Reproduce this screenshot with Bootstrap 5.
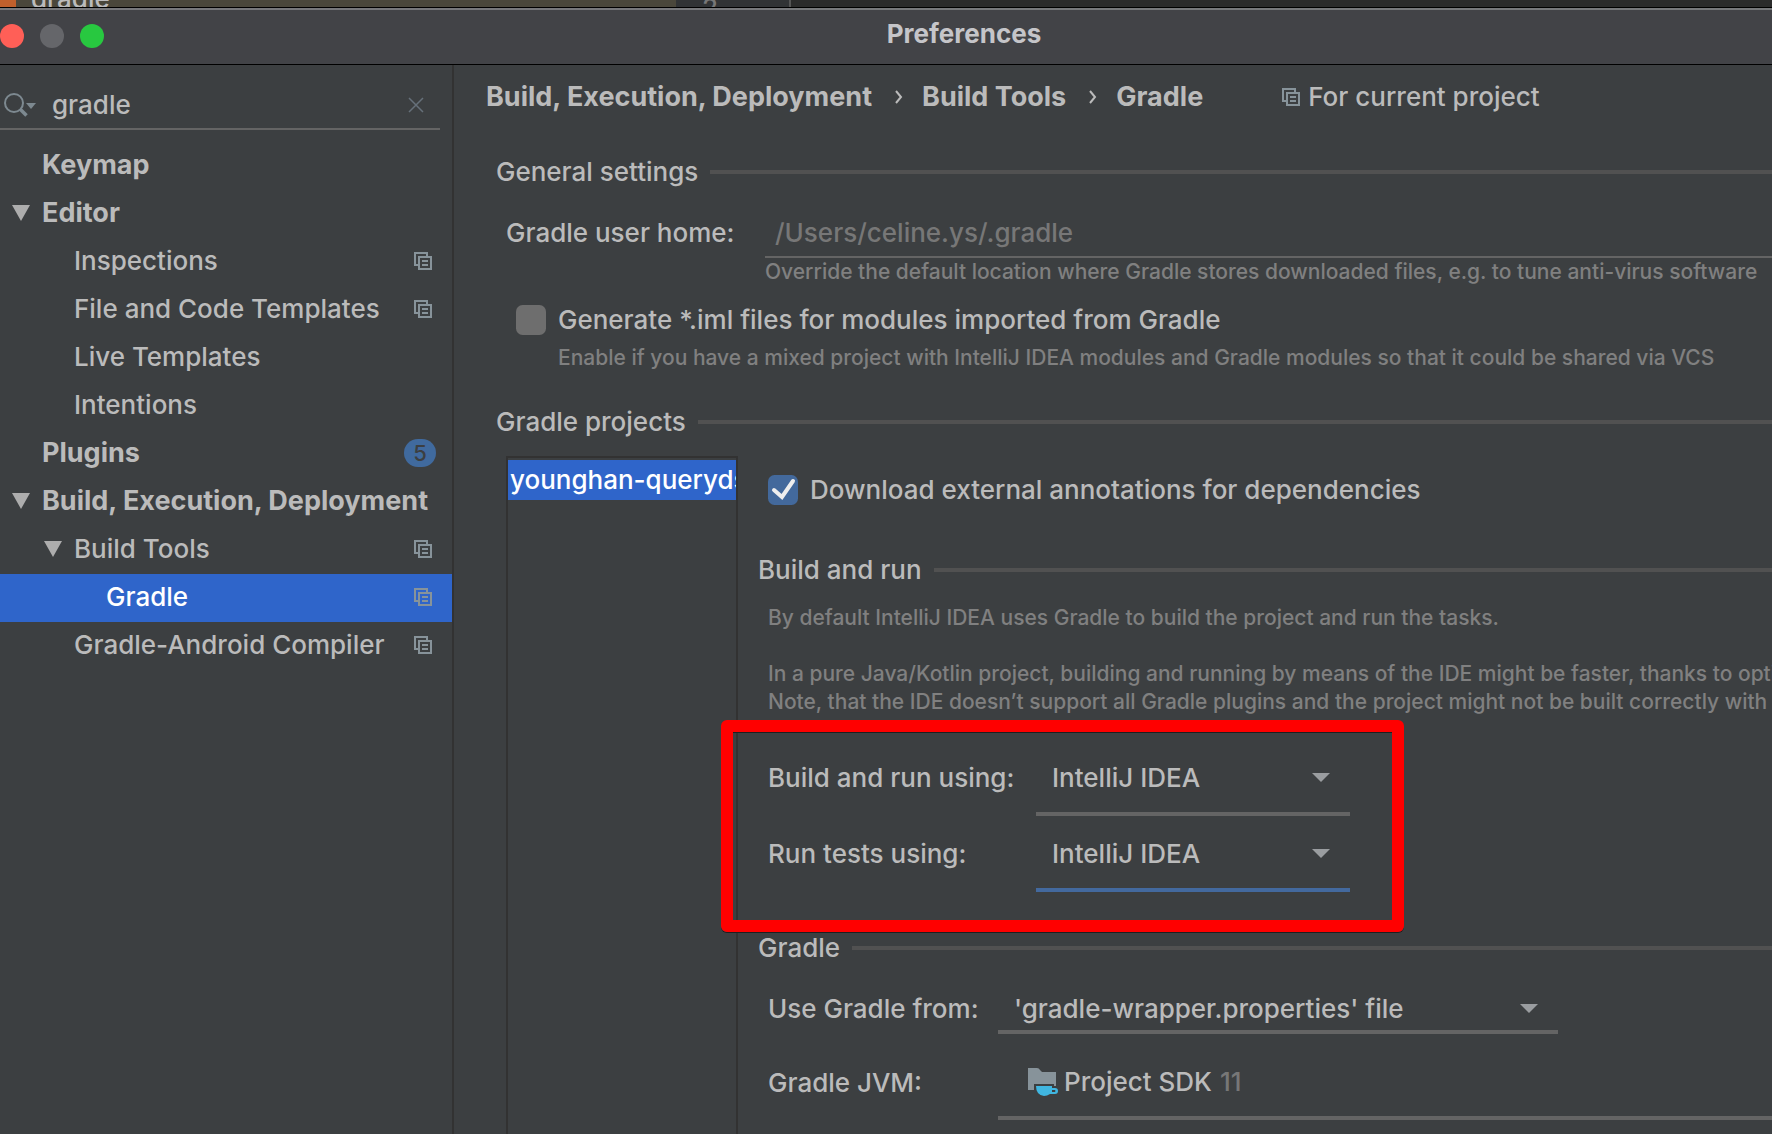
<!DOCTYPE html>
<html lang="en" data-bs-theme="dark">
<head>
<meta charset="utf-8">
<meta name="viewport" content="width=device-width, initial-scale=1">
<title>Preferences</title>
<link href="https://cdn.jsdelivr.net/npm/bootstrap@5.3.0/dist/css/bootstrap.min.css" rel="stylesheet">
<style>
  :root { --pane: #3c3f41; --ink: #bbbbbb; --dim: #808080; --rule: #515151; --field: #646464; --pick: #2f65ca; --accent: #43699e; --edge: #323232; }
  body { background: var(--pane); color: var(--ink); font-family: Inter, "Liberation Sans", sans-serif; font-size: 26px; line-height: 32px; font-weight: 500; }
  a { color: inherit; text-decoration: none; }
  input, select, button { font-weight: inherit; }
  svg { flex: none; }
  .app-window { height: 100vh; }

  /* editor behind the dialog */
  .backdrop-strip { height: 7px; background: #2b2b2b; }
  .strip-flag { width: 16px; background: #c0602c; }
  .strip-row { width: 660px; padding-left: 15px; background: #4a473b; }
  .strip-gutter { width: 115px; padding-left: 26px; background: #313335; border-right: 2px solid #555555; color: #777777; }
  .strip-row span, .strip-gutter span { line-height: 16px; }

  /* title bar */
  .title-bar { height: 58px; background: #424347; border-top: 1px solid #000; border-bottom: 1px solid #000; box-shadow: inset 0 2px 0 #77787b; color: #c5c5c9; }
  .lights { width: 156px; gap: 16px; }
  .light { width: 24px; height: 24px; border: 0; border-radius: 50%; padding: 0; }
  .light-close { background: #ff5f57; }
  .light-min { background: #65666a; }
  .light-zoom { background: #28c840; }

  /* sidebar */
  .side { width: 454px; border-right: 2px solid var(--edge); }
  .search-box { height: 65px; margin-right: 12px; padding: 16px 8px 0 4px; border-bottom: 2px solid var(--field); }
  .search-box input { background: none; border: 0; outline: 0; color: var(--ink); padding: 0 0 0 16px; min-width: 0; }
  .bare-btn { background: none; border: 0; padding: 0; line-height: 1; display: flex; }
  .tree { padding-top: 12px; }
  .tree a { display: flex; align-items: center; height: 48px; padding-right: 20px; padding-bottom: 2px; white-space: nowrap; }
  .tree .twist { width: 18px; height: 16px; margin-right: 12px; fill: #adadad; }
  .tree .scope { margin-left: auto; }
  .tree .lvl-0 { padding-left: 42px; font-weight: 700; font-size: 27px; }
  .tree .lvl-0.has-twist { padding-left: 12px; }
  .lvl-1 { padding-left: 74px; }
  .lvl-1.has-twist { padding-left: 44px; }
  .lvl-2 { padding-left: 106px; }
  .tree a.picked { background: var(--pick); color: #fff; }
  .count { margin-left: auto; margin-right: -4px; width: 32px; height: 28px; border-radius: 14px; background: #406a9e; color: var(--pane); font-size: 22px; line-height: 28px; font-weight: 500; text-align: center; }
  .scope { width: 18px; height: 18px; fill: #87939a; }

  /* settings page */
  .page { min-width: 0; overflow: hidden; white-space: nowrap; }
  .crumbs { height: 63px; padding-left: 32px; }
  .crumbs a { font-weight: 700; font-size: 27px; }
  .crumbs .sep { width: 50px; padding-left: 4px; display: flex; justify-content: center; }
  .for-project { margin-left: 79px; gap: 8px; }
  .group-title { gap: 12px; margin: 0; font-size: 26px; line-height: 32px; font-weight: 500; color: var(--ink); }
  .group-title::after { content: ""; flex: 1; height: 4px; background: var(--rule); }
  .indent-a { padding-left: 42px; }
  .indent-b { padding-left: 52px; }
  .hint { font-size: 21px; line-height: 28px; color: var(--dim); margin: 0; }
  .hint-under-tick { padding-left: 52px; }
  .line-input { height: 50px; background: none; border: 0; border-bottom: 2px solid var(--field); border-radius: 0; outline: 0; padding: 0 10px; color: var(--ink); }
  .line-input::placeholder { color: #777777; opacity: 1; }
  .tick { width: 30px; height: 30px; flex: none; border: 0; border-radius: 4px; background-color: #6e6e6e; }
  .form-check-input.tick { margin: 0; }
  .tick:checked { background-color: #43699c; background-size: 100% 100%; background-image: url("data:image/svg+xml,%3Csvg xmlns='http://www.w3.org/2000/svg' viewBox='0 0 30 30'%3E%3Cpath d='M6 15l8 7L25 6' fill='none' stroke='%23eeeeee' stroke-width='4' stroke-linecap='round'/%3E%3C/svg%3E"); }
  .tick-row { gap: 12px; padding-left: 10px; }
  .home-label { width: 259px; }
  .projects { width: 232px; border: 2px solid var(--edge); border-bottom: 0; padding-top: 2px; }
  .projects button { display: block; width: 100%; height: 40px; overflow: hidden; background: var(--pick); color: #fff; border: 0; padding: 0 0 0 2px; text-align: left; line-height: 40px; }
  .detail { padding-left: 20px; min-width: 0; }
  .detail-in { padding-left: 10px; }
  .line-select { background-color: transparent; border: 0; border-bottom: 4px solid var(--field); border-radius: 0; color: var(--ink); font-size: 26px; line-height: 32px; font-weight: 500; padding: 0 60px 0 16px; box-shadow: none; background-size: 18px 10px; background-position: right 20px center; background-image: url("data:image/svg+xml,%3Csvg xmlns='http://www.w3.org/2000/svg' viewBox='0 0 18 10'%3E%3Cpath d='M0 0h18l-9 9z' fill='%239a9da0'/%3E%3C/svg%3E"); }
  .line-select.active-field { border-color: var(--accent); }
  .runner { width: 582px; display: grid; grid-template-columns: 268px 314px; row-gap: 4px; align-items: center; }
  .runner .line-select { height: 72px; }
  .runner label, .wrap-label { padding-bottom: 4px; }
  .marker { inset: -24px -54px -40px -47px; border: 12px solid #f00; border-radius: 6px; pointer-events: none; box-shadow: 0 1px 0 #1d1f20, inset 0 1px 0 #1d1f20; }
  .wrap-label { width: 230px; flex: none; }
  .wrapper-select { width: 560px; height: 46px; }
  .jvm { height: 70px; border: 0; border-bottom: 4px solid var(--field); background: none; color: var(--ink); padding: 0 0 2px 30px; gap: 6px; text-align: left; }
  .jvm-version { color: #777777; padding-left: 2px; }
  .push-18 { margin-top: 18px; }
  .push-20 { margin-top: 20px; }
  .push-28 { margin-top: 28px; }
  .push-34 { margin-top: 34px; }
  .push-40 { margin-top: 40px; }
</style>
<script src="https://cdn.jsdelivr.net/npm/bootstrap@5.3.0/dist/js/bootstrap.bundle.min.js" defer></script>
</head>
<body>
<svg class="d-none" aria-hidden="true">
  <symbol id="scope" viewBox="0 0 18 18"><path d="M0 0h14v4h-2V2H2v10h2v2H0z"/><path fill-rule="evenodd" d="M4 4h14v14H4zM6 6v10h10V6z"/><path d="M8 8h6v2H8zM8 12h6v2H8z"/></symbol>
  <symbol id="twist" viewBox="0 0 18 16"><path d="M0 0h18L9 16z"/></symbol>
  <symbol id="chev" viewBox="0 0 8 14"><path d="M1 1l5 6-5 6" fill="none" stroke="#bbbbbb" stroke-width="2"/></symbol>
</svg>
<div class="app-window d-flex flex-column overflow-hidden">
  <div class="backdrop-strip d-flex overflow-hidden flex-shrink-0">
    <div class="strip-flag"></div>
    <div class="strip-row d-flex align-items-end"><span>gradle</span></div>
    <div class="strip-gutter d-flex align-items-start"><span>2</span></div>
  </div>
  <header class="title-bar d-flex align-items-center flex-shrink-0">
    <div class="lights d-flex">
      <button class="light light-close" type="button" aria-label="Close"></button>
      <button class="light light-min" type="button" aria-label="Minimize"></button>
      <button class="light light-zoom" type="button" aria-label="Zoom"></button>
    </div>
    <div class="flex-fill text-center fw-bold pb-1">Preferences</div>
  </header>

  <div class="d-flex flex-fill overflow-hidden">
    <aside class="side flex-shrink-0">
      <div class="search-box d-flex align-items-center">
        <svg width="32" height="24" viewBox="0 0 32 24" aria-hidden="true"><circle cx="10" cy="10" r="9" fill="none" stroke="#7d8990" stroke-width="2"/><path d="M16.500 16.500l6 6" stroke="#7d8990" stroke-width="3.500"/><path d="M22 10h10l-5 6z" fill="#7d8990"/></svg>
        <input class="flex-fill" type="text" value="gradle" aria-label="Search settings">
        <button class="bare-btn" type="button" aria-label="Clear search"><svg width="24" height="16" viewBox="0 0 24 16"><path d="M1 1l14 14M15 1L1 15" stroke="#66707a" stroke-width="1.500"/></svg></button>
      </div>
      <nav class="tree" aria-label="Settings">
        <a class="lvl-0" href="#">Keymap</a>
        <a class="lvl-0 has-twist" href="#"><svg class="twist"><use href="#twist"/></svg>Editor</a>
        <a class="lvl-1" href="#">Inspections<svg class="scope"><use href="#scope"/></svg></a>
        <a class="lvl-1" href="#">File and Code Templates<svg class="scope"><use href="#scope"/></svg></a>
        <a class="lvl-1" href="#">Live Templates</a>
        <a class="lvl-1" href="#">Intentions</a>
        <a class="lvl-0" href="#">Plugins<span class="count">5</span></a>
        <a class="lvl-0 has-twist" href="#"><svg class="twist"><use href="#twist"/></svg>Build, Execution, Deployment</a>
        <a class="lvl-1 has-twist" href="#"><svg class="twist"><use href="#twist"/></svg>Build Tools<svg class="scope"><use href="#scope"/></svg></a>
        <a class="lvl-2 picked" href="#" aria-current="page">Gradle<svg class="scope"><use href="#scope"/></svg></a>
        <a class="lvl-1" href="#">Gradle-Android Compiler<svg class="scope"><use href="#scope"/></svg></a>
      </nav>
    </aside>

    <main class="page flex-fill d-flex flex-column">
      <nav class="crumbs d-flex align-items-center flex-shrink-0" aria-label="Breadcrumb">
        <a href="#">Build, Execution, Deployment</a>
        <span class="sep"><svg width="8" height="14"><use href="#chev"/></svg></span>
        <a href="#">Build Tools</a>
        <span class="sep"><svg width="8" height="14"><use href="#chev"/></svg></span>
        <a href="#">Gradle</a>
        <span class="for-project d-flex align-items-center"><svg class="scope"><use href="#scope"/></svg>For current project</span>
      </nav>

      <section class="indent-a push-28">
        <h2 class="group-title d-flex align-items-center">General settings</h2>
      </section>
      <div class="indent-b push-20">
        <div class="d-flex align-items-center">
          <label class="home-label flex-shrink-0" for="home">Gradle user home:</label>
          <input class="line-input flex-fill" id="home" type="text" placeholder="/Users/celine.ys/.gradle">
        </div>
        <div class="d-flex">
          <div class="home-label flex-shrink-0"></div>
          <p class="hint">Override the default location where Gradle stores downloaded files, e.g. to tune anti-virus software</p>
        </div>
        <div class="tick-row push-18 d-flex align-items-center">
          <input class="form-check-input tick" type="checkbox" id="iml">
          <label for="iml">Generate *.iml files for modules imported from Gradle</label>
        </div>
        <p class="hint hint-under-tick mt-2">Enable if you have a mixed project with IntelliJ IDEA modules and Gradle modules so that it could be shared via VCS</p>
      </div>

      <section class="indent-a push-34">
        <h2 class="group-title d-flex align-items-center">Gradle projects</h2>
      </section>
      <div class="indent-b push-18 d-flex flex-fill">
        <div class="projects flex-shrink-0"><button type="button">younghan-querydsl</button></div>
        <div class="detail flex-fill">
          <div class="tick-row push-18 d-flex align-items-center">
            <input class="form-check-input tick" type="checkbox" id="annot" checked>
            <label for="annot">Download external annotations for dependencies</label>
          </div>
          <h3 class="group-title d-flex align-items-center mt-5">Build and run</h3>
          <div class="detail-in">
            <p class="hint push-18">By default IntelliJ IDEA uses Gradle to build the project and run the tasks.</p>
            <p class="hint push-28">In a pure Java/Kotlin project, building and running by means of the IDE might be faster, thanks to optimizations.<br>Note, that the IDE doesn’t support all Gradle plugins and the project might not be built correctly with some of them.</p>
          </div>
          <div class="detail-in">
            <div class="runner push-28 position-relative">
              <label for="run">Build and run using:</label>
              <select class="form-select line-select" id="run"><option>IntelliJ IDEA</option><option>Gradle</option></select>
              <label for="tests">Run tests using:</label>
              <select class="form-select line-select active-field" id="tests"><option>IntelliJ IDEA</option><option>Gradle</option></select>
              <div class="marker position-absolute"></div>
            </div>
          </div>
          <h3 class="group-title d-flex align-items-center push-40">Gradle</h3>
          <div class="detail-in">
            <div class="d-flex align-items-center mt-4">
              <label class="wrap-label" for="from">Use Gradle from:</label>
              <select class="form-select line-select wrapper-select" id="from"><option>'gradle-wrapper.properties' file</option></select>
            </div>
            <div class="d-flex align-items-center mt-3">
              <label class="wrap-label" for="jvm">Gradle JVM:</label>
              <button class="jvm flex-fill d-flex align-items-center" id="jvm" type="button" aria-haspopup="listbox">
                <svg width="30" height="28" viewBox="0 0 30 28" aria-hidden="true"><path d="M0 0h9q2 0 3 2l2 2h14v14h-2v-2H6v6H0z" fill="#87939a"/><path d="M8 18h16v2h3a3 3 0 0 1 0 6h-5q-3 2-6 2-8-1-8-10zM24 22v2h3q1-1 0-2z" fill="#40b6e0" fill-rule="evenodd"/></svg>
                <span>Project SDK</span><span class="jvm-version">11</span>
              </button>
            </div>
          </div>
        </div>
      </div>
    </main>
  </div>
</div>
</body>
</html>
